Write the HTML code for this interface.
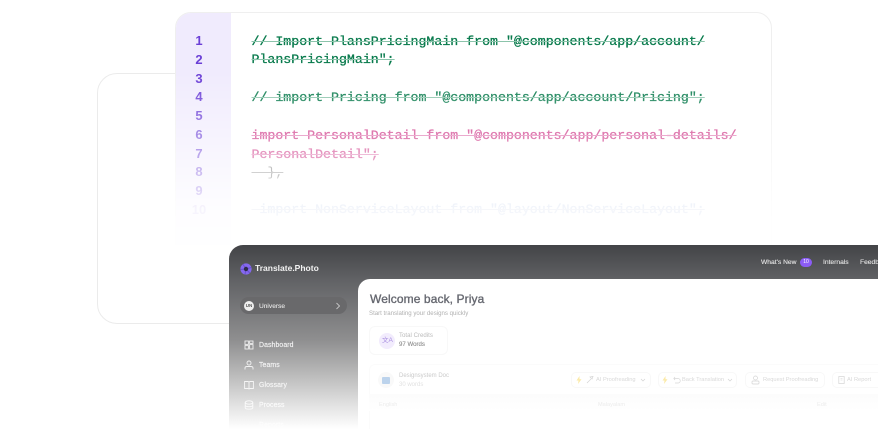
<!DOCTYPE html>
<html><head><meta charset="utf-8">
<style>
html,body{margin:0;padding:0;background:#fff}
#r{position:relative;width:878px;height:429px;overflow:hidden;background:#fff;font-family:"Liberation Sans",sans-serif;filter:blur(.25px)}
#r div,#r span.a{position:absolute}
.back{left:97px;top:73px;width:300px;height:251px;border:1.5px solid #ebebeb;border-radius:20px;box-sizing:border-box}
.backing{left:175px;top:12px;width:597px;height:233px;background:#fff;border-radius:16px 16px 0 0}
.codewrap{left:175px;top:12px;width:597px;height:233px;-webkit-mask-image:linear-gradient(#000 0,#000 60px,rgba(0,0,0,.1) 197px,rgba(0,0,0,.05) 233px);mask-image:linear-gradient(#000 0,#000 60px,rgba(0,0,0,.1) 197px,rgba(0,0,0,.05) 233px)}
.card{left:0;top:0;width:597px;height:260px;box-sizing:border-box;border:1.5px solid #efefef;border-radius:16px 16px 0 0;background:#fff;overflow:hidden}
.gut{left:0;top:0;width:55px;height:260px;background:#f0ebfd}
.n{left:0;width:46px;text-align:center;font-weight:bold;font-size:13px;line-height:16px;color:#6b3fd6}
.c{left:75.500px;font-family:"Liberation Mono",monospace;font-size:13.250px;line-height:16px;white-space:pre;-webkit-text-stroke:.3px currentColor;text-decoration:line-through;text-decoration-thickness:1px}
.g{color:#087a4c;text-decoration-color:#8cc4ab}
.p{color:#c81e78;text-decoration-color:#dc6cab}
.k{color:#555;text-decoration-color:#777;-webkit-text-stroke:0}
.b{color:#8ba5d8;text-decoration-color:#a8b4d0}
.app{left:229px;top:245px;width:660px;height:190px;border-radius:14px 0 0 0;background:linear-gradient(#434447 0,#626366 36px,#8f8f90 95px,#bbb 130px,#e2e2e2 160px,#fff 184px)}
.main{left:358px;top:279px;width:530px;height:150px;background:#fff;border-radius:12px 0 0 0}
.t{white-space:nowrap;line-height:10px}
.nav{left:259px;font-size:6.900px;-webkit-text-stroke:.15px currentColor;letter-spacing:.1px}
.ic{left:244px;width:10px;height:10px;fill:none;stroke-width:.9}
.btn{top:372px;height:16px;border:1px solid #f8f8f8;border-radius:5px;box-sizing:border-box}
.bt{top:375px;font-size:5.700px;color:#d9d9d9;white-space:nowrap;line-height:10px}
</style></head><body><div id="r">
<div class="back"></div>
<div class="backing"></div>
<div class="codewrap">
 <div class="card">
  <div class="gut"></div>
  <div class="n" style="top:20px">1</div>
  <div class="n" style="top:39px">2</div>
  <div class="n" style="top:58px">3</div>
  <div class="n" style="top:76px">4</div>
  <div class="n" style="top:95px">5</div>
  <div class="n" style="top:114px">6</div>
  <div class="n" style="top:133px">7</div>
  <div class="n" style="top:151px">8</div>
  <div class="n" style="top:170px">9</div>
  <div class="n" style="top:189px;color:#a98fe8">10</div>
  <div class="c g" style="top:21px">// Import PlansPricingMain from "@components/app/account/</div>
  <div class="c g" style="top:39px">PlansPricingMain";</div>
  <div class="c g" style="top:77px">// import Pricing from "@components/app/account/Pricing";</div>
  <div class="c p" style="top:115px">import PersonalDetail from "@components/app/personal-details/</div>
  <div class="c p" style="top:134px">PersonalDetail";</div>
  <div class="c k" style="top:152px">  },</div>
  <div class="c b" style="top:189px"> import NonServiceLayout from "@layout/NonServiceLayout";</div>
 </div>
</div>

<div class="app"></div>
<svg style="position:absolute;left:239.500px;top:262.500px" width="12" height="12" viewBox="0 0 12 12"><circle cx="6" cy="6" r="5.600" fill="#8468ee"/><path d="M6 6L3 1.300M6 6l5.300-1.500M6 6l-1 5.500M6 6L.6 6.500M6 6l3.800 4" stroke="#6a50d0" stroke-width="1"/><circle cx="6" cy="6" r="2.200" fill="#2e2c48"/></svg>
<div class="t" style="left:255px;top:263px;font-size:8.500px;font-weight:bold;color:#f2f2f2">Translate.Photo</div>
<div style="left:240px;top:297px;width:107px;height:17px;border-radius:9px;background:#69696b"></div>
<div style="left:244px;top:301px;width:10px;height:10px;border-radius:50%;background:#eee;color:#555;font-size:4.500px;font-weight:bold;line-height:10px;text-align:center">UN</div>
<div class="t" style="left:259px;top:302px;font-size:6.600px;color:#e6e6e6;-webkit-text-stroke:.1px #e6e6e6">Universe</div>
<svg style="position:absolute;left:335px;top:302px" width="6" height="8" viewBox="0 0 6 8"><path d="M1.500 1l3 3-3 3" fill="none" stroke="#d8d8d8" stroke-width=".8"/></svg>

<svg class="ic" style="position:absolute;top:340px;stroke:#efefef" viewBox="0 0 10 10"><rect x="1" y="1" width="3.400" height="3.400"/><rect x="5.600" y="1" width="3.400" height="2.400"/><rect x="1" y="5.600" width="3.400" height="3.400"/><rect x="5.600" y="4.600" width="3.400" height="4.400"/></svg>
<div class="t nav" style="top:341px;color:#f2f2f2">Dashboard</div>
<svg class="ic" style="position:absolute;top:360px;stroke:#f2f2f2" viewBox="0 0 10 10"><circle cx="5" cy="3" r="2"/><path d="M1 9.500V8c0-1 1-1.500 2-1.500h4c1 0 2 .5 2 1.500v1.500"/></svg>
<div class="t nav" style="top:361px;color:#f4f4f4">Teams</div>
<svg class="ic" style="position:absolute;top:380px;stroke:#f6f6f6" viewBox="0 0 10 10"><path d="M5 2v7M.6 1.500h3c1 0 1.400.4 1.400 1 0-.6.4-1 1.400-1h3v7h-3.500L5 9l-.9-.5H.6z"/></svg>
<div class="t nav" style="top:381px;color:#f6f6f6">Glossary</div>
<svg class="ic" style="position:absolute;top:400px;stroke:#fafafa" viewBox="0 0 10 10"><ellipse cx="5" cy="2.500" rx="3.800" ry="1.700"/><path d="M1.200 2.500v5c0 1 1.700 1.700 3.800 1.700s3.800-.7 3.800-1.700v-5M1.200 5c0 1 1.700 1.700 3.800 1.700S8.800 6 8.800 5"/></svg>
<div class="t nav" style="top:401px;color:#fbfbfb">Process</div>
<div class="t nav" style="top:421px;color:#fdfdfd">Reports</div>

<div class="t" style="left:761px;top:258px;font-size:6.700px;color:#e8e8e8;-webkit-text-stroke:.1px #e8e8e8">What's New</div>
<div style="left:800px;top:258px;width:12px;height:9px;border-radius:5px;background:#8b5cf6;color:#fff;font-size:5px;line-height:9px;text-align:center">10</div>
<div class="t" style="left:823px;top:258px;font-size:6.700px;color:#e8e8e8;-webkit-text-stroke:.1px #e8e8e8">Internals</div>
<div class="t" style="left:860px;top:258px;font-size:6.700px;color:#e8e8e8;-webkit-text-stroke:.1px #e8e8e8">Feedback</div>

<div class="main"></div>
<div class="t" style="left:370px;top:293px;font-size:12px;line-height:13px;color:#666870;letter-spacing:.1px;-webkit-text-stroke:.35px #666870">Welcome back, Priya</div>
<div class="t" style="left:369px;top:309px;font-size:6.100px;color:#b0b0b0">Start translating your designs quickly</div>

<div style="left:369px;top:326px;width:79px;height:29px;border:1px solid #f8f8f8;border-radius:6px;box-sizing:border-box"></div>
<div style="left:378.500px;top:332.500px;width:16px;height:16px;border-radius:50%;background:#f2ecfd"></div>
<div class="t" style="left:382px;top:336px;font-size:6.500px;color:#a98fe0;font-family:'Liberation Sans','Noto Sans CJK SC',sans-serif">文A</div>
<div class="t" style="left:399px;top:331px;font-size:6.100px;color:#bbb">Total Credits</div>
<div class="t" style="left:399px;top:340px;font-size:6.100px;color:#8a8a8a;-webkit-text-stroke:.1px #8a8a8a">97 Words</div>

<div style="left:369px;top:364px;width:530px;height:80px;border:1px solid #fbfbfb;border-radius:6px;box-sizing:border-box"></div>
<div style="left:378px;top:372px;width:16px;height:16px;border-radius:50%;background:#f9f9f9"></div>
<div style="left:382px;top:377px;width:8px;height:7px;border-radius:1px;background:#bcd3ec"></div>
<div class="t" style="left:399px;top:371px;font-size:6px;color:#cacaca">Designsystem Doc</div>
<div class="t" style="left:399px;top:380px;font-size:6px;color:#e2e2e2">30 words</div>

<div class="btn" style="left:571px;width:80px"></div>
<svg style="position:absolute;left:576px;top:376px" width="6" height="8" viewBox="0 0 6 8"><path d="M3.500 0L.5 4.500h2L2 8l3.500-4.800H3.500z" fill="#fbeaa8"/></svg>
<svg style="position:absolute;left:586px;top:375px" width="8" height="9" viewBox="0 0 8 9"><path d="M1 8l4-4M4 2l2 2 1-2.500z" fill="none" stroke="#d4d4d4" stroke-width=".7"/></svg>
<div class="a bt" style="left:596px">AI Proofreading</div>
<svg style="position:absolute;left:640px;top:378px" width="6" height="5" viewBox="0 0 6 5"><path d="M1 1l2 2 2-2" fill="none" stroke="#d4d4d4" stroke-width=".7"/></svg>

<div class="btn" style="left:658px;width:79px"></div>
<svg style="position:absolute;left:662px;top:376px" width="6" height="8" viewBox="0 0 6 8"><path d="M3.500 0L.5 4.500h2L2 8l3.500-4.800H3.500z" fill="#fbeaa8"/></svg>
<svg style="position:absolute;left:673px;top:376px" width="8" height="8" viewBox="0 0 8 8"><path d="M2 1L.8 2.500 2 4M1 2.500h4a2 2 0 0 1 0 4.500H2" fill="none" stroke="#d8d8d8" stroke-width=".7"/></svg>
<div class="a bt" style="left:682px">Back Translation</div>
<svg style="position:absolute;left:727px;top:378px" width="6" height="5" viewBox="0 0 6 5"><path d="M1 1l2 2 2-2" fill="none" stroke="#d4d4d4" stroke-width=".7"/></svg>

<div class="btn" style="left:745px;width:80px"></div>
<svg style="position:absolute;left:751px;top:375px" width="9" height="10" viewBox="0 0 9 10"><circle cx="4.500" cy="3" r="2" fill="none" stroke="#d4d4d4" stroke-width=".7"/><rect x="1" y="6" width="7" height="3" rx="1" fill="none" stroke="#d4d4d4" stroke-width=".7"/></svg>
<div class="a bt" style="left:763px">Request Proofreading</div>

<div class="btn" style="left:832px;width:60px"></div>
<svg style="position:absolute;left:838px;top:375px" width="7" height="10" viewBox="0 0 7 10"><rect x=".8" y="1.500" width="5.400" height="7" fill="none" stroke="#d4d4d4" stroke-width=".7"/><path d="M2.500 3.500h2M2.500 5h2" stroke="#d4d4d4" stroke-width=".6"/></svg>
<div class="a bt" style="left:847px">AI Report</div>

<div style="left:369px;top:394px;width:509px;height:17px;background:linear-gradient(#fcfcfc,#fff)"></div>
<div class="t" style="left:379px;top:400px;font-size:5.600px;color:#ececec">English</div>
<div class="t" style="left:598px;top:400px;font-size:5.600px;color:#ececec">Malayalam</div>
<div class="t" style="left:817px;top:400px;font-size:5.600px;color:#ececec">Edit</div>
</div></body></html>
